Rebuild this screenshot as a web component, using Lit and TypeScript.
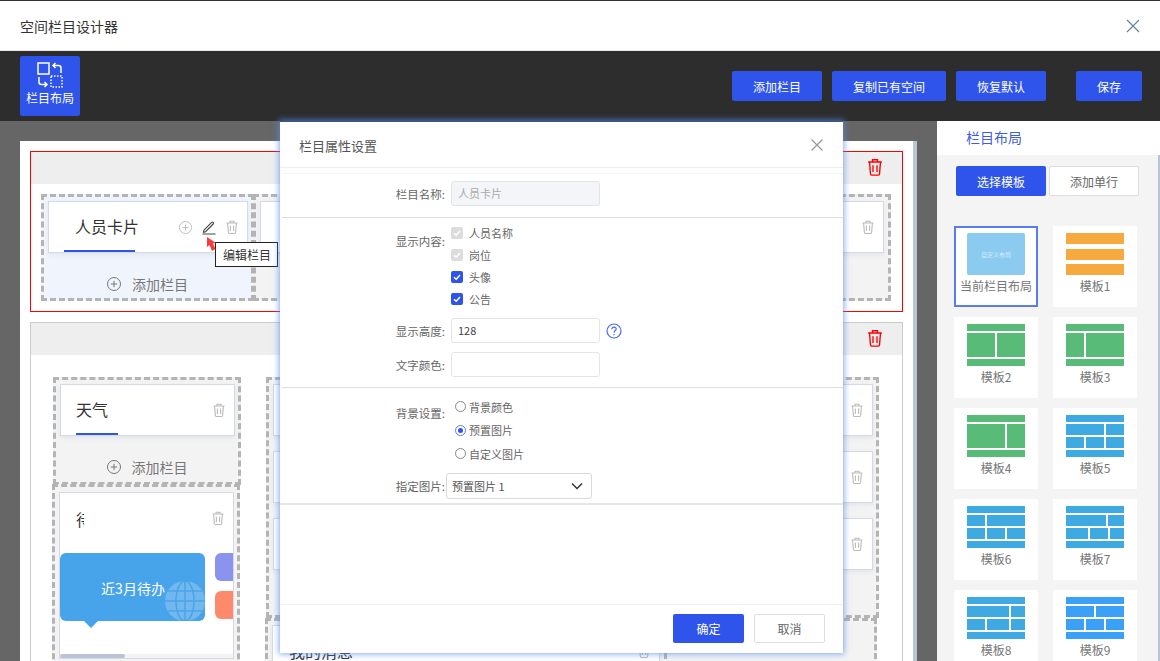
import { LitElement, html, css, svg } from 'lit';
import { customElement } from 'lit/decorators.js';

interface Template {
  name: string;
  color: string;
  rows: number[][];
}

const GREEN = '#58bb78';
const BLUE = '#3fa9e1';

const templates: Template[] = [
  { name: '模板1', color: '#f5a93f', rows: [[1], [1], [1]] },
  { name: '模板2', color: GREEN, rows: [[1], [28, 28], [1]] },
  { name: '模板3', color: GREEN, rows: [[1], [18, 38], [1]] },
  { name: '模板4', color: GREEN, rows: [[1], [38, 18], [1]] },
  { name: '模板5', color: BLUE, rows: [[1], [38, 18], [18, 18, 18], [1]] },
  { name: '模板6', color: BLUE, rows: [[1], [18, 38], [18, 18, 18], [1]] },
  { name: '模板7', color: BLUE, rows: [[1], [40, 16], [22, 18, 14], [1]] },
  { name: '模板8', color: BLUE, rows: [[1], [42, 14], [18, 22, 14], [1]] },
  { name: '模板9', color: '#3ba1f8', rows: [[1], [28, 28], [18, 18, 18], [1]] },
];

const trash = svg`<path d="M2.5 4h11M6 4V2.2h4V4M3.6 4l.8 9.6c0 .5.4.9.9.9h5.4c.5 0 .9-.4.9-.9l.8-9.6M6.4 6.5v5.5M9.6 6.5v5.5" fill="none" stroke="currentColor" stroke-width="1.1"/>`;
const plusCircle = svg`<circle cx="8" cy="8" r="6.5" fill="none" stroke="currentColor"/><path d="M8 4.8v6.4M4.8 8h6.4" stroke="currentColor"/>`;

@customElement('app-root')
export class AppRoot extends LitElement {
  static override styles = css`
    :host {
      display: block;
      position: relative;
      width: 1160px;
      height: 661px;
      overflow: hidden;
      background: #fff;
      font-family: 'Noto Sans CJK SC', 'Liberation Sans', sans-serif;
      color: #333;
    }

    svg {
      display: block;
      flex: none;
    }

    button {
      font: inherit;
      border: 0;
      padding: 0;
      border-radius: 2px;
      background: #2f54eb;
      color: #fff;
      font-size: 12px;
      height: 30px;
    }

    .titlebar {
      height: 49px;
      border-top: 1px solid #333;
      border-bottom: 1px solid #e8e8e8;
      display: flex;
      align-items: center;
      justify-content: space-between;
      padding: 0 20px;
      font-size: 14px;
    }

    .window-close {
      color: #5f7fa8;
    }

    .toolbar {
      height: 70px;
      background: #2d2d2d;
      display: flex;
      align-items: center;
      padding: 0 18px 0 20px;
    }

    .layout-btn {
      width: 60px;
      height: 60px;
      border-radius: 2px;
      background: #2f54eb;
      color: #fff;
      font-size: 12px;
      line-height: 16px;
      display: flex;
      flex-direction: column;
      align-items: center;
      padding-top: 6px;
      box-sizing: border-box;
      margin-right: auto;
    }

    .layout-btn span {
      margin-top: 2px;
    }

    .toolbar button {
      margin-left: 10px;
    }

    .toolbar .save {
      margin-left: 30px;
    }

    .main {
      display: flex;
      height: 540px;
      overflow: hidden;
    }

    .canvas {
      width: 937px;
      flex: none;
      box-sizing: border-box;
      background: #666;
      padding: 20px 20px 0;
    }

    .sheet {
      height: 520px;
      box-sizing: border-box;
      background: #fff;
      padding: 10px 10px 0;
      border-right: 4px solid #b9c4d6;
      overflow: hidden;
    }

    .row {
      border: 1px solid #ccc;
      margin-bottom: 10px;
    }

    .row.active {
      border-color: #f00;
    }

    .row-head {
      height: 32px;
      box-sizing: border-box;
      background: #eee;
      display: flex;
      justify-content: flex-end;
      align-items: center;
      padding: 0 17px 2px 0;
      color: #f00;
    }

    .row-body {
      display: flex;
      padding: 10px 11px 10px 10px;
    }

    .row-body.columns {
      padding: 22px 0 0 22px;
      height: 400px;
    }

    .cell {
      border: 3px dashed #b4b4b4;
      padding: 4px;
      background: #f3f3f3;
      box-sizing: border-box;
      flex: none;
    }

    .cell.selected {
      background: #f0f4fc;
    }

    .cell.first {
      width: 213px;
      height: 107px;
      padding-right: 3px;
    }

    .cell.second {
      width: 638px;
      height: 107px;
      margin-left: -1px;
    }

    .card {
      height: 52px;
      box-sizing: border-box;
      background: #fff;
      border: 1px solid #d5d9e6;
      display: flex;
      align-items: center;
      justify-content: flex-end;
      gap: 8px;
      padding-right: 7px;
      color: #bbb;
      box-shadow: 0 2px 4px rgba(180, 190, 210, 0.25);
      position: relative;
      margin-bottom: 15px;
    }

    .card .tab {
      margin-right: auto;
      align-self: stretch;
      margin-left: 15px;
      padding-left: 11px;
      width: 71px;
      box-sizing: border-box;
      font-size: 16px;
      line-height: 48px;
      color: #333;
      white-space: nowrap;
      border-bottom: 2px solid #2f54eb;
      height: 50px;
      margin-bottom: -1px;
    }

    .edit {
      color: #444;
      margin-right: -1px;
    }

    .add {
      display: flex;
      align-items: center;
      justify-content: center;
      gap: 10px;
      font-size: 14px;
      color: #777;
      margin-left: -2px;
      padding-top: 6px;
    }

    .stack {
      width: 188px;
      flex: none;
    }

    .stack .cell {
      width: 188px;
      padding-right: 3px;
    }

    .stack .weather {
      height: 108px;
    }

    .stack .card .tab {
      width: 42px;
      padding-left: 0;
    }

    .stack .todo {
      margin: -1px 0 0 -1px;
      padding-top: 5px;
      height: 300px;
    }

    .todo-card {
      height: 167px;
      background: #fff;
      border: 1px solid #d5d9e6;
      position: relative;
      overflow: hidden;
      box-sizing: border-box;
    }

    .todo-head {
      height: 60px;
      display: flex;
      justify-content: flex-end;
      padding: 17px 7px 0 0;
      box-sizing: border-box;
      color: #bbb;
    }

    .todo-head .clipped {
      margin-right: auto;
      margin-left: 16px;
      width: 8px;
      overflow: hidden;
      white-space: nowrap;
      font-size: 16px;
      line-height: 18px;
      color: #333;
    }

    .tiles {
      display: flex;
      gap: 10px;
      padding-bottom: 33px;
    }

    .big-tile {
      width: 145px;
      height: 68px;
      flex: none;
      background: #48a4ea;
      border-radius: 6px;
      color: #fff;
      font-size: 14px;
      position: relative;
      display: flex;
      align-items: center;
      justify-content: center;
    }

    .big-tile::after {
      content: '';
      position: absolute;
      left: 24px;
      bottom: -7px;
      border: 7px solid transparent;
      border-bottom: 0;
      border-top-color: #48a4ea;
    }

    .big-tile span {
      margin: 2px 0 0 1px;
      position: relative;
      z-index: 1;
    }

    .globe {
      position: absolute;
      right: 0;
      bottom: 0;
    }

    .small-tiles {
      display: flex;
      flex-direction: column;
      gap: 10px;
    }

    .small-tiles i {
      display: block;
      width: 24px;
      height: 28px;
      border-radius: 6px;
    }

    .hbar {
      height: 4px;
      background: #f3f3f3;
      position: absolute;
      left: 0;
      right: 0;
      bottom: 0;
    }

    .hbar i {
      display: block;
      width: 65px;
      height: 100%;
      border-radius: 2px;
      background: #b9c4d6;
    }

    .wide {
      flex: none;
      margin-left: 25px;
      width: 613px;
    }

    .wide .cell.top {
      height: 241px;
      padding-right: 3px;
    }

    .bottom-cells {
      display: flex;
      margin-left: -1px;
    }

    .bottom-cells .left {
      width: 402px;
    }

    .bottom-cells .right {
      width: 213px;
      margin-left: -3px;
      height: 120px;
    }

    .card.message .tab {
      border: 0;
      width: auto;
      margin-left: 5px;
      line-height: 50px;
    }

    .panel {
      flex: 1;
      display: flex;
      flex-direction: column;
    }

    .panel-tab {
      height: 34px;
      flex: none;
      padding-left: 29px;
      font-size: 14px;
      line-height: 32px;
      color: #3f5de0;
    }

    .panel-body {
      flex: 1;
      background: #f4f4f4;
      border-right: 2px solid #b9c4d6;
      padding: 11px 0 0 17px;
    }

    .panel-actions {
      display: flex;
      gap: 3px;
      margin-left: 2px;
      margin-bottom: 30px;
    }

    .panel-actions button {
      width: 90px;
    }

    .panel-actions .plain {
      background: #fff;
      border: 1px solid #ddd;
      color: #666;
    }

    .template-grid {
      display: grid;
      grid-template-columns: 84px 84px;
      column-gap: 15px;
      row-gap: 10px;
    }

    .template {
      height: 81px;
      box-sizing: border-box;
      background: #fff;
      padding-top: 7px;
      display: flex;
      flex-direction: column;
      align-items: center;
      font-size: 12px;
      color: #777;
    }

    .template.current {
      border: 2px solid #5a7cf0;
      padding-top: 5px;
    }

    .thumb {
      width: 58px;
      height: 42px;
      margin-bottom: 1px;
      display: flex;
      flex-direction: column;
      justify-content: space-between;
      gap: 2px;
      flex: none;
    }

    .thumb.current-thumb {
      background: #8ccbf0;
      border-radius: 2px;
      align-items: center;
      justify-content: center;
      color: #d5ecfa;
      font-size: 6px;
    }

    .thumb-row {
      display: flex;
      justify-content: space-between;
      flex: 1 1 0;
      gap: 2px;
    }

    .thumb-row.edge {
      flex: 0 0 7px;
    }

    .thumb.bars .thumb-row {
      flex: 0 0 11px;
    }

    .template-label {
      line-height: 20px;
      white-space: nowrap;
    }

    .tooltip {
      position: absolute;
      left: 215px;
      top: 242px;
      width: 63px;
      height: 25px;
      box-sizing: border-box;
      border: 1px solid #222;
      background: #fff;
      padding-left: 7px;
      font-size: 12px;
      line-height: 23px;
      color: #333;
      white-space: nowrap;
    }

    .cursor {
      position: absolute;
      left: 206px;
      top: 236px;
    }

    .modal {
      position: absolute;
      left: 280px;
      top: 121px;
      width: 563px;
      height: 531px;
      background: #fff;
      box-shadow: 0 0 6px 1px rgba(90, 140, 240, 0.75);
      border-top: 1px solid #34588c;
      display: flex;
      flex-direction: column;
      color: #666;
      font-size: 11px;
    }

    .modal-head {
      height: 46px;
      flex: none;
      box-sizing: border-box;
      border-bottom: 1px solid #eee;
      display: flex;
      align-items: center;
      justify-content: space-between;
      padding: 0 19px;
      font-size: 13px;
      color: #555;
    }

    .modal-head span {
      margin-top: 1px;
    }

    .modal-head svg {
      color: #999;
    }

    .section {
      border-bottom: 1px solid #ddd;
      margin-left: 2px;
      flex: none;
    }

    .section.name {
      border-top: 1px solid #f5f5f5;
      margin-top: 5px;
      padding: 7px 0 11px;
    }

    .section.content {
      padding-top: 4px;
      height: 170px;
      box-sizing: border-box;
    }

    .section.bg {
      padding-top: 9px;
      height: 117px;
      box-sizing: border-box;
      border-bottom: 2px solid #e6e6e6;
      margin-left: 0;
    }

    .field {
      display: flex;
      align-items: center;
      margin-bottom: 9px;
    }

    .section.name .field {
      margin-bottom: 0;
    }

    .field.top {
      align-items: flex-start;
      margin-bottom: 8px;
    }

    .field label {
      width: 163px;
      flex: none;
      text-align: right;
      margin-right: 6px;
      line-height: 16px;
      font-size: 11.5px;
    }

    .field label.content-label {
      margin-top: 11px;
    }

    .field label.bg-label {
      margin-top: 8px;
    }

    .section.bg .field label {
      width: 165px;
    }

    .input {
      width: 149px;
      height: 25px;
      box-sizing: border-box;
      border: 1px solid #e1e4ea;
      border-radius: 3px;
      background: #fff;
      padding-left: 6px;
      line-height: 23px;
      color: #444;
      flex: none;
    }

    .input.disabled {
      background: #f3f5f8;
      color: #aaa;
    }

    .help {
      margin-left: 6px;
      color: #4a6cf0;
    }

    .options {
      display: flex;
      flex-direction: column;
    }

    .check {
      display: flex;
      align-items: center;
      height: 22px;
      gap: 6px;
    }

    .box {
      width: 12px;
      height: 12px;
      border-radius: 2px;
      background: #2f54eb;
      color: #fff;
      display: flex;
      align-items: center;
      justify-content: center;
    }

    .box.off {
      background: #dcdcdc;
    }

    .radio {
      display: flex;
      align-items: center;
      height: 23.5px;
      gap: 3px;
      padding-left: 4px;
    }

    .dot {
      width: 11px;
      height: 11px;
      box-sizing: border-box;
      border: 1px solid #888;
      border-radius: 50%;
      background: #fff;
      display: flex;
      align-items: center;
      justify-content: center;
    }

    .dot.on {
      border-color: #5a7cf0;
    }

    .dot.on::after {
      content: '';
      width: 5px;
      height: 5px;
      border-radius: 50%;
      background: #2f54eb;
    }

    .section.bg .options {
      margin-top: -2px;
    }

    .section.bg .field.top {
      margin-bottom: 7px;
    }

    .section.bg .select-field {
      margin: 0.5px 0 0;
    }

    .section.bg .select-field label {
      margin-right: 1px;
    }

    .select {
      width: 146px;
      height: 26px;
      box-sizing: border-box;
      border: 1px solid #d9d9d9;
      border-radius: 3px;
      display: flex;
      align-items: center;
      justify-content: space-between;
      padding: 0 8px 0 5px;
      color: #555;
    }

    .select svg {
      color: #333;
    }

    .modal-spacer {
      flex: 1;
    }

    .modal-foot {
      height: 49px;
      flex: none;
      border-top: 1px solid #f0f0f0;
      display: flex;
      justify-content: flex-end;
      gap: 10px;
      padding: 9px 18px 0 0;
      box-sizing: border-box;
    }

    .modal-foot button {
      width: 71px;
      height: 29px;
    }

    .modal-foot .cancel {
      background: #fff;
      border: 1px solid #ddd;
      color: #666;
    }
  `;

  private trashIcon() {
    return html`<svg width="16" height="16" viewBox="0 0 16 16">${trash}</svg>`;
  }

  private plusIcon(size: number) {
    return html`<svg width=${size} height=${size} viewBox="0 0 16 16">${plusCircle}</svg>`;
  }

  private renderThumb(t: Template) {
    const bars = t.rows.every((r) => r.length === 1);
    return html`
      <div class="thumb ${bars ? 'bars' : ''}">
        ${t.rows.map(
          (row) => html`
            <div class="thumb-row ${row.length === 1 ? 'edge' : ''}">
              ${row.map(
                (w) => html`<div style="flex:${w} ${w} 0;background:${t.color}"></div>`
              )}
            </div>
          `
        )}
      </div>
    `;
  }

  private renderPanel() {
    return html`
      <aside class="panel">
        <div class="panel-tab">栏目布局</div>
        <div class="panel-body">
          <div class="panel-actions">
            <button>选择模板</button>
            <button class="plain">添加单行</button>
          </div>
          <div class="template-grid">
            <div class="template current">
              <div class="thumb current-thumb">自定义布局</div>
              <div class="template-label">当前栏目布局</div>
            </div>
            ${templates.map(
              (t) => html`
                <div class="template">
                  ${this.renderThumb(t)}
                  <div class="template-label">${t.name}</div>
                </div>
              `
            )}
          </div>
        </div>
      </aside>
    `;
  }

  private renderCanvas() {
    return html`
      <div class="canvas">
        <div class="sheet">
          <section class="row active">
            <div class="row-head">
              <svg width="20" height="20" viewBox="0 0 16 16">${trash}</svg>
            </div>
            <div class="row-body">
              <div class="cell selected first">
                <div class="card">
                  <div class="tab">人员卡片</div>
                  ${this.plusIcon(15)}
                  <svg class="edit" width="16" height="16" viewBox="0 0 16 16">
                    <path d="M3 11.2 10.6 3.4c.5-.5 1.2-.5 1.6 0s.5 1.2 0 1.6L4.6 12.7l-2.1.5zM1.5 15h13" fill="none" stroke="currentColor" stroke-width="1.1"/>
                  </svg>
                  ${this.trashIcon()}
                </div>
                <div class="add">${this.plusIcon(16)}<span>添加栏目</span></div>
              </div>
              <div class="cell second">
                <div class="card">${this.trashIcon()}</div>
              </div>
            </div>
          </section>
          <section class="row">
            <div class="row-head">
              <svg width="20" height="20" viewBox="0 0 16 16">${trash}</svg>
            </div>
            <div class="row-body columns">
              <div class="stack">
                <div class="cell weather">
                  <div class="card">
                    <div class="tab">天气</div>
                    ${this.trashIcon()}
                  </div>
                  <div class="add">${this.plusIcon(16)}<span>添加栏目</span></div>
                </div>
                <div class="cell todo">
                  <div class="todo-card">
                    <div class="todo-head">
                      <div class="clipped">待办</div>
                      ${this.trashIcon()}
                    </div>
                    <div class="tiles">
                      <div class="big-tile">
                        <span>近3月待办</span>
                        <svg class="globe" width="41" height="40" viewBox="0 0 41 40">
                          <circle cx="21" cy="20" r="20" fill="#72b8ee" />
                          <g fill="none" stroke="#48a4ea" stroke-width="1.5">
                            <ellipse cx="21" cy="20" rx="9" ry="20" />
                            <path d="M21 0v40M1 20h40M4 10h34M4 30h34" />
                          </g>
                        </svg>
                      </div>
                      <div class="small-tiles">
                        <i style="background:#8a94ee"></i>
                        <i style="background:#ff8a6b"></i>
                      </div>
                    </div>
                    <div class="hbar"><i></i></div>
                  </div>
                </div>
              </div>
              <div class="wide">
                <div class="cell top">
                  <div class="card">${this.trashIcon()}</div>
                  <div class="card">${this.trashIcon()}</div>
                  <div class="card">${this.trashIcon()}</div>
                </div>
                <div class="bottom-cells">
                  <div class="cell left">
                    <div class="card message">
                      <div class="tab">我的消息</div>
                      ${this.trashIcon()}
                    </div>
                  </div>
                  <div class="cell right"></div>
                </div>
              </div>
            </div>
          </section>
        </div>
      </div>
    `;
  }

  private check(label: string, off = false) {
    return html`
      <div class="check">
        <span class="box ${off ? 'off' : ''}">
          <svg width="10" height="10" viewBox="0 0 10 10">
            <path d="M2 5.2 4.2 7.2 8 3" fill="none" stroke="currentColor" stroke-width="1.5"/>
          </svg>
        </span>
        ${label}
      </div>
    `;
  }

  private radio(label: string, on = false) {
    return html`<div class="radio"><span class="dot ${on ? 'on' : ''}"></span>${label}</div>`;
  }

  private renderModal() {
    return html`
      <div class="modal">
        <div class="modal-head">
          <span>栏目属性设置</span>
          <svg width="14" height="14" viewBox="0 0 14 14">
            <path d="M1.5 1.5l11 11M12.5 1.5l-11 11" stroke="currentColor" stroke-width="1.2"/>
          </svg>
        </div>
        <div class="section name">
          <div class="field">
            <label>栏目名称:</label>
            <div class="input disabled">人员卡片</div>
          </div>
        </div>
        <div class="section content">
          <div class="field top">
            <label class="content-label">显示内容:</label>
            <div class="options">
              ${this.check('人员名称', true)} ${this.check('岗位', true)}
              ${this.check('头像')} ${this.check('公告')}
            </div>
          </div>
          <div class="field">
            <label>显示高度:</label>
            <div class="input">128</div>
            <svg class="help" width="16" height="16" viewBox="0 0 16 16">
              <circle cx="8" cy="8" r="7" fill="none" stroke="currentColor" stroke-width="1.2"/>
              <path d="M5.8 6.2c0-1.3 1-2.1 2.2-2.1s2.2.8 2.2 2c0 1.700-2.2 1.700-2.2 3.500M8 11v1.300" fill="none" stroke="currentColor" stroke-width="1.2"/>
            </svg>
          </div>
          <div class="field">
            <label>文字颜色:</label>
            <div class="input"></div>
          </div>
        </div>
        <div class="section bg">
          <div class="field top">
            <label class="bg-label">背景设置:</label>
            <div class="options">
              ${this.radio('背景颜色')} ${this.radio('预置图片', true)} ${this.radio('自定义图片')}
            </div>
          </div>
          <div class="field select-field">
            <label>指定图片:</label>
            <div class="select">
              <span>预置图片 1</span>
              <svg width="12" height="8" viewBox="0 0 12 8">
                <path d="M1 1.5 6 6.5 11 1.5" fill="none" stroke="currentColor" stroke-width="1.5"/>
              </svg>
            </div>
          </div>
        </div>
        <div class="modal-spacer"></div>
        <div class="modal-foot">
          <button>确定</button>
          <button class="cancel">取消</button>
        </div>
      </div>
    `;
  }

  override render() {
    return html`
      <header class="titlebar">
        <span>空间栏目设计器</span>
        <svg class="window-close" width="14" height="14" viewBox="0 0 14 14">
          <path d="M1 1l12 12M13 1 1 13" stroke="currentColor" stroke-width="1.1"/>
        </svg>
      </header>
      <div class="toolbar">
        <div class="layout-btn">
          <svg width="26" height="26" viewBox="0 0 26 26">
            <g fill="none" stroke="#fff" stroke-width="1.5">
              <rect x="1" y="1" width="11" height="11" />
              <rect x="14" y="14" width="11" height="11" stroke-dasharray="1.5 1.5" />
              <path d="M24 11V6c0-1.5-1-2.5-2.5-2.5H16M18.5 1 16 3.5 18.5 6" />
              <path d="M2 15v5c0 1.5 1 2.5 2.5 2.5H10M7.5 20 10 22.5 7.5 25" />
            </g>
          </svg>
          <span>栏目布局</span>
        </div>
        <button style="width:90px">添加栏目</button>
        <button style="width:114px">复制已有空间</button>
        <button style="width:90px">恢复默认</button>
        <button class="save" style="width:66px">保存</button>
      </div>
      <div class="main">${this.renderCanvas()} ${this.renderPanel()}</div>
      <div class="tooltip">编辑栏目</div>
      <svg class="cursor" width="11" height="16" viewBox="0 0 11 16">
        <path d="M1 1 1 11 3.5 9 6 15 9.5 13 7 7.5 10 7z" fill="#f63c3c"/>
      </svg>
      ${this.renderModal()}
    `;
  }
}

declare global {
  interface HTMLElementTagNameMap {
    'app-root': AppRoot;
  }
}
